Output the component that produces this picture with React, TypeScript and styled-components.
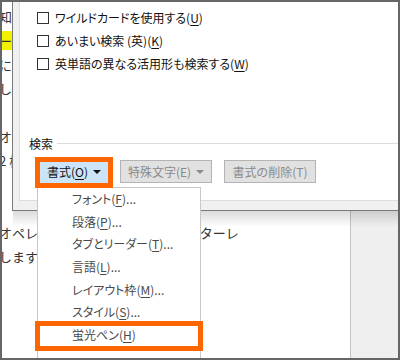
import styled, { createGlobalStyle } from "styled-components";

const GlobalStyle = createGlobalStyle`
  html, body {
    margin: 0;
    padding: 0;
    background: #fff;
  }
  body {
    font-family: "Noto Sans CJK JP", "Noto Sans", sans-serif;
  }
`;

const Frame = styled.div`
  position: relative;
  width: 400px;
  height: 360px;
  box-sizing: border-box;
  border: 2px solid #666;
  overflow: hidden;
  background: #fff;
`;

/* document behind the dialog */
const Doc = styled.div`
  display: flex;
  height: 100%;
`;

const Page = styled.div`
  flex: 0 0 348px;
  padding-top: 3px;
  background: #fff;
  border-right: 1px solid #c4c4c4;
  overflow: hidden;
`;

const Gutter = styled.div`
  flex: 1;
  background: #efefef;
`;

const DocLine = styled.div`
  height: 24px;
  line-height: 24px;
  margin-left: -3px;
  font-size: 13px;
  color: #333;
  white-space: nowrap;
`;

const Marker = styled.span`
  background: #f2f200;
`;

/* find & replace dialog */
const Dialog = styled.div`
  position: absolute;
  left: 10px;
  top: -12px;
  right: -20px;
  border: 1px solid #7a7a7a;
  background: #f0f0f0;
  padding: 0 0 9px 6px;
  font-feature-settings: "palt" 1;

  &::after {
    content: "";
    position: absolute;
    left: 0;
    right: 0;
    top: calc(100% + 1px);
    height: 16px;
    background: linear-gradient(rgba(0, 0, 0, 0.14), rgba(0, 0, 0, 0));
  }
`;

const Panel = styled.div`
  height: 208px;
  background: #fff;
  border: 1px solid #dcdcdc;
  border-right: none;
`;

const Options = styled.div`
  padding: 14px 0 0 17px;
`;

const OptionRow = styled.label`
  display: flex;
  align-items: center;
  gap: 6px;
  height: 23px;
  font-size: 12px;
  color: #111;
`;

const Box = styled.span`
  width: 12px;
  height: 12px;
  box-sizing: border-box;
  border: 1px solid #333;
  background: #fff;
`;

const Key = styled.span`
  text-decoration: underline;
  text-underline-offset: 2px;
`;

const GroupHeader = styled.div`
  display: flex;
  align-items: center;
  gap: 4px;
  height: 16px;
  margin-top: 60px;
  padding-left: 9px;
  font-size: 12px;
  color: #111;
`;

const Rule = styled.div`
  flex: 1;
  height: 1px;
  background: #dcdcdc;
`;

const ButtonRow = styled.div`
  display: flex;
  gap: 12px;
  margin-top: 9px;
  padding-left: 20px;
`;

const Button = styled.div<{ $width: number; $active?: boolean; $marked?: boolean }>`
  position: relative;
  display: flex;
  align-items: center;
  justify-content: center;
  gap: 5px;
  width: ${({ $width }) => $width}px;
  height: 23px;
  box-sizing: border-box;
  font-size: 12px;
  color: ${({ $active }) => ($active ? "#111" : "#8a8a8a")};
  background: ${({ $active }) => ($active ? "#cce4f7" : "#e1e1e1")};
  border: 1px solid ${({ $active }) => ($active ? "#cce4f7" : "#b4b4b4")};

  ${({ $marked }) =>
    $marked &&
    `
    &::after {
      content: "";
      position: absolute;
      inset: -4px -6px -6px -6px;
      border: 5px solid #ff6600;
      z-index: 3;
    }
  `}
`;

const Caret = styled.span<{ $dim?: boolean }>`
  width: 0;
  height: 0;
  border-left: 4px solid transparent;
  border-right: 4px solid transparent;
  border-top: 4px solid ${({ $dim }) => ($dim ? "#8a8a8a" : "#111")};
`;

/* format drop-down */
const Menu = styled.div`
  position: absolute;
  left: 35px;
  top: 185px;
  width: 164px;
  height: 200px;
  box-sizing: border-box;
  background: #fff;
  border: 1px solid #c8c8c8;
  z-index: 2;
  font-feature-settings: "palt" 1;
`;

const MenuItem = styled.div<{ $marked?: boolean }>`
  position: relative;
  height: 22.7px;
  line-height: 22.7px;
  padding-left: 34px;
  font-size: 12px;
  color: #4a4a4a;
  white-space: nowrap;

  ${({ $marked }) =>
    $marked &&
    `
    &::after {
      content: "";
      position: absolute;
      inset: -3px -3px -4px -3px;
      border: 5px solid #ff6600;
    }
  `}
`;

const options = [
  { label: "ワイルドカードを使用する", key: "U" },
  { label: "あいまい検索 (英)", key: "K" },
  { label: "英単語の異なる活用形も検索する", key: "W" },
];

const menuItems = [
  { label: "フォント", key: "F", dots: true },
  { label: "段落", key: "P", dots: true },
  { label: "タブとリーダー", key: "T", dots: true },
  { label: "言語", key: "L", dots: true },
  { label: "レイアウト枠", key: "M", dots: true },
  { label: "スタイル", key: "S", dots: true },
  { label: "蛍光ペン", key: "H", dots: false },
];

export default function App() {
  return (
    <>
      <GlobalStyle />
      <Frame>
        <Doc>
          <Page>
            <DocLine>知っておくと便利な機能です。</DocLine>
            <DocLine>
              <Marker>ームの色を変更する</Marker>
            </DocLine>
            <DocLine>に設定します。</DocLine>
            <DocLine>しています。</DocLine>
            <DocLine>&nbsp;</DocLine>
            <DocLine>オプション</DocLine>
            <DocLine>2 検索</DocLine>
            <DocLine>&nbsp;</DocLine>
            <DocLine>&nbsp;</DocLine>
            <DocLine>オペレーションで書式を検索して{"\u2002"}ターレ</DocLine>
            <DocLine>します。</DocLine>
          </Page>
          <Gutter />
        </Doc>

        <Dialog>
          <Panel>
            <Options>
              {options.map((o) => (
                <OptionRow key={o.key}>
                  <Box />
                  <span>
                    {o.label}(<Key>{o.key}</Key>)
                  </span>
                </OptionRow>
              ))}
            </Options>

            <GroupHeader>
              <span>検索</span>
              <Rule />
            </GroupHeader>

            <ButtonRow>
              <Button $width={68} $active $marked>
                <span>
                  書式(<Key>O</Key>)
                </span>
                <Caret />
              </Button>
              <Button $width={92}>
                <span>特殊文字(E)</span>
                <Caret $dim />
              </Button>
              <Button $width={92}>
                <span>書式の削除(T)</span>
              </Button>
            </ButtonRow>
          </Panel>
        </Dialog>

        <Menu>
          {menuItems.map((m, i) => (
            <MenuItem key={m.key} $marked={i === menuItems.length - 1}>
              {m.label}(<Key>{m.key}</Key>){m.dots ? "..." : ""}
            </MenuItem>
          ))}
        </Menu>
      </Frame>
    </>
  );
}
